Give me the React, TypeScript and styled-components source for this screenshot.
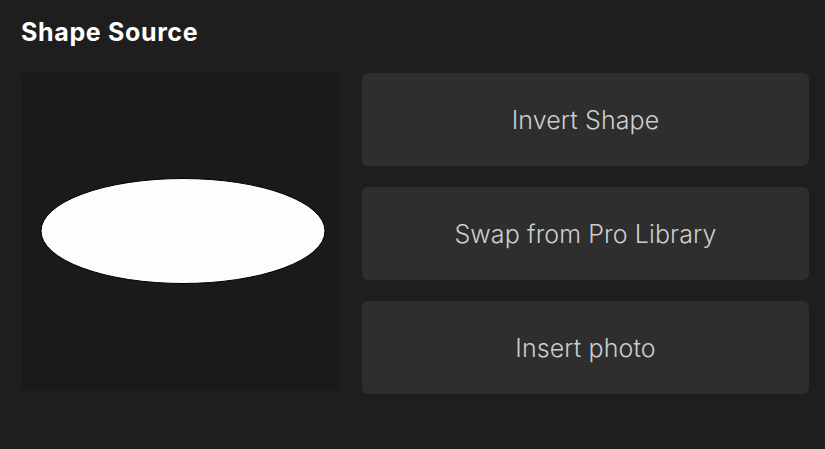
import styled, {createGlobalStyle} from "styled-components";

const GlobalStyle = createGlobalStyle`
    html, body {
        margin: 0;
        padding: 0;
        background: #1e1e1e;
    }
    body {
        font-family: Inter, "Noto Sans", sans-serif;
        -webkit-font-smoothing: antialiased;
    }
`;

const actions = ["Invert Shape", "Swap from Pro Library", "Insert photo"];

const App = () => {
    return (
        <>
            <GlobalStyle/>
            <Page>
                <Title>Shape Source</Title>
                <Content>
                    <Preview>
                        <svg width="286" height="108" viewBox="0 0 286 108">
                            <ellipse cx="143" cy="54" rx="142" ry="52.5" fill="#fdfdfd" stroke="#000" strokeWidth="1"/>
                        </svg>
                    </Preview>
                    <ActionList>
                        {
                            actions.map((label, index) => (
                                <ActionButton key={index}>{label}</ActionButton>
                            ))
                        }
                    </ActionList>
                </Content>
            </Page>
        </>
    )
}

const Page = styled.div`
    width: 825px;
    height: 449px;
    box-sizing: border-box;
    padding: 17px 16px 0 21px;
    background: #1e1e1e;
`;

const Title = styled.h1`
    margin: 0;
    height: 30px;
    line-height: 30px;
    font-size: 25px;
    font-weight: 700;
    color: #ffffff;
    letter-spacing: 0.65px;
`;

const Content = styled.div`
    display: flex;
    gap: 22px;
    margin-top: 26px;
    padding-left: 1px;
`;

const Preview = styled.div`
    width: 318px;
    height: 317px;
    display: flex;
    align-items: center;
    justify-content: center;
    background: #1a1a1a;
    border-radius: 4px;

    svg {
        display: block;
        margin-left: 4px;
        margin-top: -1px;
    }
`;

const ActionList = styled.div`
    flex: 1;
    display: flex;
    flex-direction: column;
    gap: 21px;
`;

const ActionButton = styled.button`
    height: 93px;
    border: none;
    border-radius: 6px;
    background: #2e2e2e;
    color: #cdcdcd;
    font-family: Inter, "Noto Sans", sans-serif;
    font-size: 25px;
    font-weight: 300;
    letter-spacing: 0.1px;
    cursor: pointer;
`;

export default App;
